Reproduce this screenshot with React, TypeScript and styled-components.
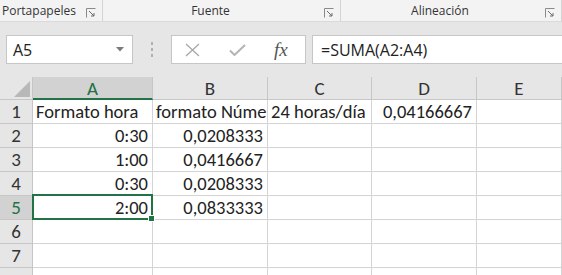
import React from 'react';
import styled, { createGlobalStyle } from 'styled-components';

const GlobalStyle = createGlobalStyle`
  html, body {
    margin: 0;
    padding: 0;
    background: #ffffff;
    overflow: hidden;
  }
`;

const Page = styled.div`
  width: 562px;
  height: 275px;
  overflow: hidden;
  background: #e6e6e6;
`;

const Ribbon = styled.div`
  display: flex;
  height: 21px;
  background: #f3f3f3;
  border-bottom: 1px solid #dadada;
  font-family: 'Open Sans', 'Noto Sans', sans-serif;
  font-size: 12px;
  color: #333;
`;

const Group = styled.div<{ $w: number; $align?: 'left' | 'center' }>`
  position: relative;
  width: ${(p) => p.$w}px;
  flex-shrink: 0;
  display: flex;
  align-items: center;
  justify-content: ${(p) => (p.$align === 'left' ? 'flex-start' : 'center')};
  padding-left: ${(p) => (p.$align === 'left' ? '2px' : '0')};
  padding-right: 22px;
  box-sizing: border-box;
  border-right: 1px solid #d4d4d4;
  line-height: 1;
`;

const Launcher = styled.svg`
  position: absolute;
  right: 6px;
  top: 8px;
`;

const FormulaRow = styled.div`
  display: flex;
  align-items: stretch;
  height: 29px;
  padding: 13px 0 13px 6px;
`;

const NameBox = styled.div`
  width: 127px;
  box-sizing: border-box;
  background: #fff;
  border: 1px solid #c6c6c6;
  display: flex;
  align-items: center;
  justify-content: space-between;
  padding: 0 8px 0 6px;
  font-family: 'Open Sans', 'Noto Sans', sans-serif;
  font-size: 16px;
  color: #222;
`;

const Dots = styled.div`
  width: 38px;
  display: flex;
  flex-direction: column;
  align-items: center;
  justify-content: center;
  gap: 3px;
  span {
    width: 2px;
    height: 3px;
    background: #b0b0b0;
  }
`;

const FxBox = styled.div`
  width: 135px;
  box-sizing: border-box;
  background: #fff;
  border: 1px solid #c6c6c6;
  display: flex;
  align-items: center;
  gap: 29px;
  padding: 0 0 0 13px;
  margin-right: 6px;
`;

const Fx = styled.span`
  font-family: 'Liberation Serif', serif;
  font-style: italic;
  font-size: 19px;
  color: #555;
  margin-left: -1px;
`;

const Formula = styled.div`
  flex: 1;
  background: #fff;
  border: 1px solid #c6c6c6;
  border-right: none;
  display: flex;
  align-items: center;
  padding-left: 8px;
  font-family: 'Open Sans', 'Noto Sans', sans-serif;
  font-size: 16px;
  color: #222;
`;

const Grid = styled.div`
  display: grid;
  grid-template-columns: 33px 120px 115px 104px 105px 1fr;
  grid-template-rows: 23px repeat(8, 24px);
  background: #fff;
  font-family: 'Carlito', 'Open Sans', sans-serif;
  font-size: 18.5px;
  color: #222;
`;

const Corner = styled.div`
  position: relative;
  background: #e6e6e6;
  border-right: 1px solid #c6c6c6;
  border-bottom: 1px solid #c6c6c6;
  svg {
    position: absolute;
    right: 2px;
    bottom: 2px;
  }
`;

const ColHead = styled.div<{ $active?: boolean }>`
  background: ${(p) => (p.$active ? '#d2d2d2' : '#e6e6e6')};
  color: ${(p) => (p.$active ? '#217346' : '#333')};
  border-right: 1px solid #c6c6c6;
  border-bottom: ${(p) => (p.$active ? '2px solid #217346' : '1px solid #c6c6c6')};
  display: flex;
  align-items: center;
  justify-content: center;
  font-size: 19px;
  padding-top: 1px;
`;

const RowHead = styled(ColHead)`
  border-bottom: 1px solid #c6c6c6;
  padding-top: 0;
`;

const Cell = styled.div<{ $align?: 'left' | 'right'; $overflow?: boolean }>`
  position: relative;
  border-right: 1px solid #d4d4d4;
  border-bottom: 1px solid #d4d4d4;
  display: flex;
  align-items: center;
  justify-content: ${(p) => (p.$align === 'right' ? 'flex-end' : 'flex-start')};
  padding: 0 4px 0 3px;
  white-space: nowrap;
  overflow: ${(p) => (p.$overflow ? 'visible' : 'hidden')};
`;

const Selection = styled.div`
  position: absolute;
  z-index: 2;
  left: -1px;
  top: -2px;
  right: -1px;
  bottom: -1px;
  border: 2px solid #217346;
  pointer-events: none;
  &::after {
    content: '';
    position: absolute;
    right: -4px;
    bottom: -4px;
    width: 5px;
    height: 5px;
    background: #217346;
    border: 1px solid #fff;
  }
`;

const LauncherIcon = () => (
  <Launcher width="10" height="10" viewBox="0 0 10 10">
    <path d="M0.5 9.5V0.5H9.5" fill="none" stroke="#8a8a8a" />
    <path d="M3 3L8 8M8 5V8H5" fill="none" stroke="#6a6a6a" />
  </Launcher>
);

const columns = ['A', 'B', 'C', 'D', 'E'];

type Row = { a: string; b: string; c?: string; d?: string };

const rows: Row[] = [
  { a: 'Formato hora', b: 'formato Número', c: '24 horas/día', d: '0,04166667' },
  { a: '0:30', b: '0,0208333' },
  { a: '1:00', b: '0,0416667' },
  { a: '0:30', b: '0,0208333' },
  { a: '2:00', b: '0,0833333' },
  { a: '', b: '' },
  { a: '', b: '' },
  { a: '', b: '' },
];

const App: React.FC = () => {
  return (
    <Page>
      <GlobalStyle />
      <Ribbon>
        <Group $w={103} $align="left">
          Portapapeles
          <LauncherIcon />
        </Group>
        <Group $w={238}>
          Fuente
          <LauncherIcon />
        </Group>
        <Group $w={221}>
          Alineación
          <LauncherIcon />
        </Group>
      </Ribbon>
      <FormulaRow>
        <NameBox>
          A5
          <svg width="8" height="5" viewBox="0 0 8 5">
            <path d="M0 0H8L4 4.5Z" fill="#7a7a7a" />
          </svg>
        </NameBox>
        <Dots>
          <span />
          <span />
          <span />
        </Dots>
        <FxBox>
          <svg width="15" height="14" viewBox="0 0 15 14">
            <path d="M1 1L14 13M14 1L1 13" stroke="#a8a8a8" strokeWidth="1.3" fill="none" />
          </svg>
          <svg width="17" height="12" viewBox="0 0 17 12">
            <path d="M1 6.5L5.5 11L16 1" stroke="#b4b4b4" strokeWidth="2" fill="none" />
          </svg>
          <Fx>fx</Fx>
        </FxBox>
        <Formula>=SUMA(A2:A4)</Formula>
      </FormulaRow>
      <Grid>
        <Corner>
          <svg width="16" height="16" viewBox="0 0 16 16">
            <path d="M16 0V16H0Z" fill="#b8b8b8" />
          </svg>
        </Corner>
        {columns.map((c) => (
          <ColHead key={c} $active={c === 'A'}>
            {c}
          </ColHead>
        ))}
        {rows.map((r, i) => (
          <React.Fragment key={i}>
            <RowHead $active={i === 4}>{i < 7 ? i + 1 : ''}</RowHead>
            <Cell $align={i === 0 ? 'left' : 'right'} $overflow={i === 4}>
              {r.a}
              {i === 4 && <Selection />}
            </Cell>
            <Cell $align={i === 0 ? 'left' : 'right'}>{r.b}</Cell>
            <Cell $overflow>{r.c}</Cell>
            <Cell $align="right">{r.d}</Cell>
            <Cell />
          </React.Fragment>
        ))}
      </Grid>
    </Page>
  );
};

export default App;
